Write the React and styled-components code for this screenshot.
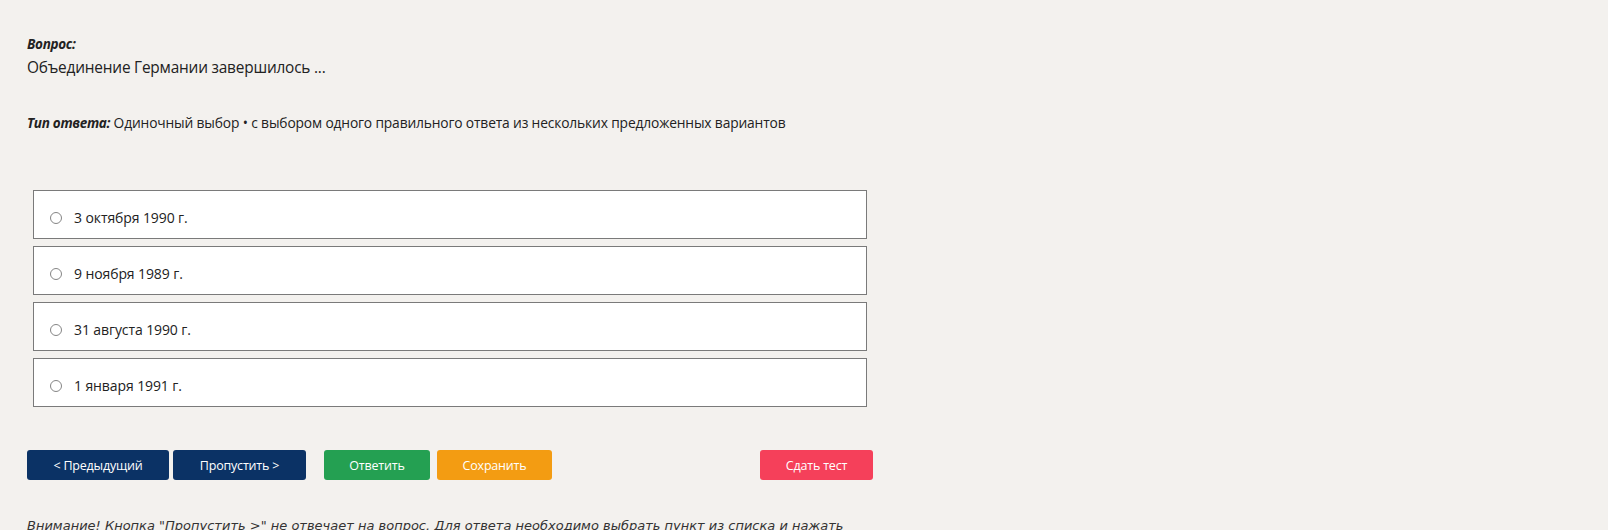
import styled, { createGlobalStyle } from "styled-components"
import React from "react"

const GlobalStyle = createGlobalStyle`
    body{
        margin: 0;
        background: #F3F1EE;
        font-family: "Open Sans", "Noto Sans", sans-serif;
        color: #222222;
    }
`

const variantes = [
    "3 октября 1990 г.",
    "9 ноября 1989 г.",
    "31 августа 1990 г.",
    "1 января 1991 г."
]

export default function App(){

    const [escolhida, setEscolhida] = React.useState(null);

    return (
        <>
            <GlobalStyle />
            <Pagina>
                <Rotulo>Вопрос:</Rotulo>
                <Pergunta>Объединение Германии завершилось ...</Pergunta>
                <TipoResposta>
                    <Rotulo as="span">Тип ответа:</Rotulo> Одиночный выбор • с выбором одного правильного ответа из нескольких предложенных вариантов
                </TipoResposta>

                <Lista>
                    {variantes.map((texto, i) => (
                        <Opcao key={i}>
                            <Radio
                                type="radio"
                                name="resposta"
                                checked={escolhida === i}
                                onChange={() => setEscolhida(i)}
                            />
                            {texto}
                        </Opcao>
                    ))}
                </Lista>

                <Botoes>
                    <Botao cor="#0B3265" largura={142}>&lt; Предыдущий</Botao>
                    <Botao cor="#0B3265" largura={133}>Пропустить &gt;</Botao>
                    <Botao cor="#24A052" largura={106} margem={18}>Ответить</Botao>
                    <Botao cor="#F39C12" largura={115} margem={7}>Сохранить</Botao>
                    <Botao cor="#F5405A" largura={113} margem={208}>Сдать тест</Botao>
                </Botoes>

                <Aviso>
                    Внимание! Кнопка "Пропустить &gt;" не отвечает на вопрос. Для ответа необходимо выбрать пункт из списка и нажать
                </Aviso>
            </Pagina>
        </>
    )
}

const Pagina = styled.div`
    padding: 35px 27px 0;
    height: 530px;
    box-sizing: border-box;
    overflow: hidden;
`

const Rotulo = styled.div`
    font-size: 13.5px;
    line-height: 18px;
    font-weight: 700;
    font-style: italic;
    color: #222222;
    letter-spacing: -0.3px;
`

const Pergunta = styled.div`
    margin-top: 4px;
    font-size: 15.4px;
    line-height: 22px;
    color: #222222;
    letter-spacing: -0.2px;
`

const TipoResposta = styled.div`
    margin-top: 35px;
    font-size: 13.8px;
    line-height: 18px;
    color: #222222;
    letter-spacing: -0.15px;
`

const Lista = styled.div`
    margin: 58px 0 0 6px;
    width: 834px;
    display: flex;
    flex-direction: column;
    gap: 7px;
`

const Opcao = styled.label`
    height: 49px;
    box-sizing: border-box;
    background: #FFFFFF;
    border: 1px solid #7A7A7A;
    display: flex;
    align-items: center;
    padding: 6px 0 0 16px;
    gap: 12px;
    font-size: 14px;
    color: #222222;
    letter-spacing: -0.1px;
    cursor: pointer;
`

const Radio = styled.input`
    appearance: none;
    margin: 0;
    width: 12px;
    height: 12px;
    border: 1px solid #858585;
    border-radius: 50%;
    background: #FFFFFF;
    &:checked{
        border: 3px solid #0B3265;
    }
`

const Botoes = styled.div`
    margin-top: 43px;
    display: flex;
    align-items: center;
    gap: 4px;
`

const Botao = styled.button`
    width: ${(props) => props.largura}px;
    height: 30px;
    margin-left: ${(props) => props.margem ? props.margem - 4 : 0}px;
    background: ${(props) => props.cor};
    border: none;
    border-radius: 3px;
    color: #FFFFFF;
    font-family: "Open Sans", "Noto Sans", sans-serif;
    font-size: 12.5px;
    letter-spacing: -0.2px;
    cursor: pointer;
`

const Aviso = styled.div`
    margin-top: 37px;
    font-family: "DejaVu Sans", Verdana, sans-serif;
    font-style: italic;
    font-size: 13px;
    line-height: 18px;
    color: #333333;
`
